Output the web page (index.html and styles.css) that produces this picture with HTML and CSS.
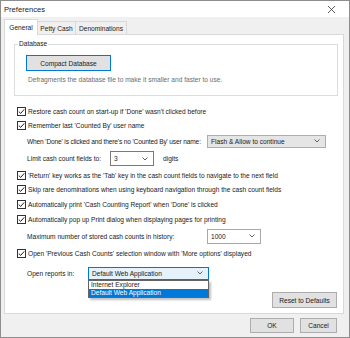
FILE: index.html
```html
<!DOCTYPE html>
<html lang="en">
<head>
    <meta charset="UTF-8">
    <title>Preferences</title>
    <link rel="stylesheet" href="styles.css">
</head>
<body>

    <div class="window">
        <!-- Title bar -->
        <div class="titlebar">
            <span class="title">Preferences</span>
            <svg class="close" width="7" height="7" viewBox="0 0 7 7"><path d="M0 0 7 7M7 0 0 7" stroke="#333" stroke-width="0.8"/></svg>
        </div>

        <!-- Tabs -->
        <div class="tabs">
            <div class="tab tab-general active">General</div>
            <div class="tab tab-petty">Petty Cash</div>
            <div class="tab tab-denom">Denominations</div>
        </div>

        <!-- General page -->
        <div class="panel">
            <fieldset class="group">
                <legend>Database</legend>
                <div class="group-body">
                    <button class="btn btn-default compact">Compact Database</button>
                    <p class="hint">Defragments the database file to make it smaller and faster to use.</p>
                </div>
            </fieldset>

            <div class="options">
                <div class="row r14">
                    <svg class="cb" width="9" height="9" viewBox="0 0 9 9"><rect x=".5" y=".5" width="8" height="8" fill="#fff" stroke="#333"/><path d="M1.8 4.6 3.7 6.4 7.2 2.4" fill="none" stroke="#222"/></svg>
                    <span>Restore cash count on start-up if 'Done' wasn't clicked before</span>
                </div>
                <div class="row r15">
                    <svg class="cb" width="9" height="9" viewBox="0 0 9 9"><rect x=".5" y=".5" width="8" height="8" fill="#fff" stroke="#333"/><path d="M1.8 4.6 3.7 6.4 7.2 2.4" fill="none" stroke="#222"/></svg>
                    <span>Remember last 'Counted By' user name</span>
                </div>
                <div class="row r16 indent">
                    <span class="label label-wide tight">When 'Done' is clicked and there's no 'Counted By' user name:</span>
                    <div class="combo combo-flash">
                        <span>Flash &amp; Allow to continue</span>
                        <svg class="chev" width="6" height="4" viewBox="0 0 6 4"><path d="M.5.5 3 3 5.5.5" fill="none" stroke="#606060"/></svg>
                    </div>
                </div>
                <div class="row r19 indent">
                    <span class="label label-limit">Limit cash count fields to:</span>
                    <div class="combo combo-edit combo-small">
                        <span>3</span>
                        <svg class="chev" width="6" height="4" viewBox="0 0 6 4"><path d="M.5.5 3 3 5.5.5" fill="none" stroke="#606060"/></svg>
                    </div>
                    <span class="unit">digits</span>
                </div>
                <div class="row r14">
                    <svg class="cb" width="9" height="9" viewBox="0 0 9 9"><rect x=".5" y=".5" width="8" height="8" fill="#fff" stroke="#333"/><path d="M1.8 4.6 3.7 6.4 7.2 2.4" fill="none" stroke="#222"/></svg>
                    <span>'Return' key works as the 'Tab' key in the cash count fields to navigate to the next field</span>
                </div>
                <div class="row r15">
                    <svg class="cb" width="9" height="9" viewBox="0 0 9 9"><rect x=".5" y=".5" width="8" height="8" fill="#fff" stroke="#333"/><path d="M1.8 4.6 3.7 6.4 7.2 2.4" fill="none" stroke="#222"/></svg>
                    <span>Skip rare denominations when using keyboard navigation through the cash count fields</span>
                </div>
                <div class="row r15">
                    <svg class="cb" width="9" height="9" viewBox="0 0 9 9"><rect x=".5" y=".5" width="8" height="8" fill="#fff" stroke="#333"/><path d="M1.8 4.6 3.7 6.4 7.2 2.4" fill="none" stroke="#222"/></svg>
                    <span>Automatically print 'Cash Counting Report' when 'Done' is clicked</span>
                </div>
                <div class="row r15">
                    <svg class="cb" width="9" height="9" viewBox="0 0 9 9"><rect x=".5" y=".5" width="8" height="8" fill="#fff" stroke="#333"/><path d="M1.8 4.6 3.7 6.4 7.2 2.4" fill="none" stroke="#222"/></svg>
                    <span>Automatically pop up Print dialog when displaying pages for printing</span>
                </div>
                <div class="row r18 indent">
                    <span class="label label-wide">Maximum number of stored cash counts in history:</span>
                    <div class="combo combo-edit combo-light">
                        <span>1000</span>
                        <svg class="chev" width="6" height="4" viewBox="0 0 6 4"><path d="M.5.5 3 3 5.5.5" fill="none" stroke="#606060"/></svg>
                    </div>
                </div>
                <div class="row r16">
                    <svg class="cb" width="9" height="9" viewBox="0 0 9 9"><rect x=".5" y=".5" width="8" height="8" fill="#fff" stroke="#333"/><path d="M1.8 4.6 3.7 6.4 7.2 2.4" fill="none" stroke="#222"/></svg>
                    <span>Open 'Previous Cash Counts' selection window with 'More options' displayed</span>
                </div>
                <div class="row r24 indent">
                    <span class="label label-reports">Open reports in:</span>
                    <div class="combo combo-open">
                        <span>Default Web Application</span>
                        <svg class="chev" width="6" height="4" viewBox="0 0 6 4"><path d="M.5.5 3 3 5.5.5" fill="none" stroke="#606060"/></svg>
                        <ul class="droplist">
                            <li>Internet Explorer</li>
                            <li class="selected">Default Web Application</li>
                        </ul>
                    </div>
                </div>
            </div>

            <button class="btn reset">Reset to Defaults</button>
        </div>

        <!-- Dialog buttons -->
        <div class="footer">
            <button class="btn ok">OK</button>
            <button class="btn cancel">Cancel</button>
        </div>
    </div>

</body>
</html>
```

FILE: styles.css
```css
* {
    box-sizing: border-box;
}

body {
    margin: 0;
    font-family: "Liberation Sans", Arial, sans-serif;
    font-size: 6.6px;
    color: #1a1a1a;
}

/* Window frame */
.window {
    width: 350px;
    height: 338px;
    border: 1px solid #8e8e8e;
    background: #f0f0f0;
    display: flex;
    flex-direction: column;
}

.titlebar {
    height: 16px;
    flex-shrink: 0;
    background: #fff;
    display: flex;
    align-items: center;
    justify-content: space-between;
    padding: 0 14px 0 3px;
}

.title {
    font-size: 7.6px;
}

/* Tabs */
.tabs {
    height: 17px;
    flex-shrink: 0;
    display: flex;
    align-items: flex-end;
    padding-left: 3px;
}

.tab {
    height: 13px;
    display: flex;
    align-items: center;
    justify-content: center;
    border: 1px solid #d9d9d9;
    border-bottom: none;
    background: #f0f0f0;
    margin-left: -1px;
}

.tab.active {
    height: 16px;
    margin-left: 0;
    margin-bottom: -1px;
    background: #fff;
    position: relative;
    z-index: 1;
}

.tab-general { width: 34px; }
.tab-petty { width: 39px; }
.tab-denom { width: 52px; }

/* Page */
.panel {
    margin: 0 5px 0 3px;
    height: 280px;
    flex-shrink: 0;
    background: #fff;
    border: 1px solid #d9d9d9;
    display: flex;
    flex-direction: column;
    padding: 0 5px 0 9px;
}

.group {
    margin: 4px 0 0;
    padding: 0 0 10px 3px;
    border: 1px solid #dcdcdc;
    min-width: 0;
}

.group legend {
    padding: 0 1px;
    line-height: 10px;
}

.group-body {
    padding-left: 8px;
}

.btn {
    font: inherit;
    color: #1a1a1a;
    background: #e1e1e1;
    border: 1px solid #adadad;
    padding: 0;
    height: 16px;
}

.btn-default {
    border-color: #0078d7;
}

.compact {
    margin-top: 6px;
    width: 85px;
    display: block;
}

.hint {
    margin: 4px 0 0 2px;
    line-height: 10px;
    color: #6d6d6d;
}

/* Option rows */
.options {
    margin-top: 8px;
    padding-left: 3px;
}

.row {
    display: flex;
    align-items: center;
    white-space: nowrap;
}

.row .cb {
    flex-shrink: 0;
    margin-right: 2px;
}

.r14 { height: 14px; }
.r15 { height: 15px; }
.r16 { height: 16px; }
.r18 { height: 18px; }
.r19 { height: 19px; }
.r24 { height: 24px; }

.indent {
    padding-left: 10px;
}

.label {
    flex-shrink: 0;
}

.label-wide { width: 180px; }
.label-limit { width: 83px; }
.label-reports { width: 61px; }

.tight {
    letter-spacing: -0.15px;
}

.unit {
    margin-left: 9px;
}

/* Combo boxes */
.combo {
    position: relative;
    display: flex;
    align-items: center;
    justify-content: space-between;
    padding: 0 5px 0 3px;
    border: 1px solid #adadad;
    background: #e5e5e5;
}

.combo-flash {
    width: 119px;
    height: 13px;
}

.combo-edit {
    width: 54px;
    height: 15px;
    background: #fff;
    border-color: #7a7a7a;
}

.combo-small {
    width: 44px;
}

.combo-light {
    border-color: #a8a8a8;
}

.combo-open {
    width: 121px;
    height: 13px;
    background: #e5f1fb;
    border-color: #0078d7;
}

.droplist {
    position: absolute;
    top: 12px;
    left: -1px;
    width: 121px;
    margin: 0;
    padding: 0;
    list-style: none;
    background: #fff;
    border: 1px solid #646464;
    box-shadow: 2px 2px 2px rgba(0, 0, 0, 0.25);
    z-index: 2;
}

.droplist li {
    height: 8px;
    line-height: 8px;
    padding-left: 2px;
}

.droplist .selected {
    background: #0078d7;
    color: #fff;
}

/* Buttons */
.reset {
    margin: auto 1px 5px 0;
    align-self: flex-end;
    width: 65px;
}

.footer {
    display: flex;
    justify-content: flex-end;
    gap: 6px;
    padding: 4px 12px 0 0;
}

.footer .btn {
    height: 15px;
}

.ok { width: 44px; }
.cancel { width: 37px; }
```
